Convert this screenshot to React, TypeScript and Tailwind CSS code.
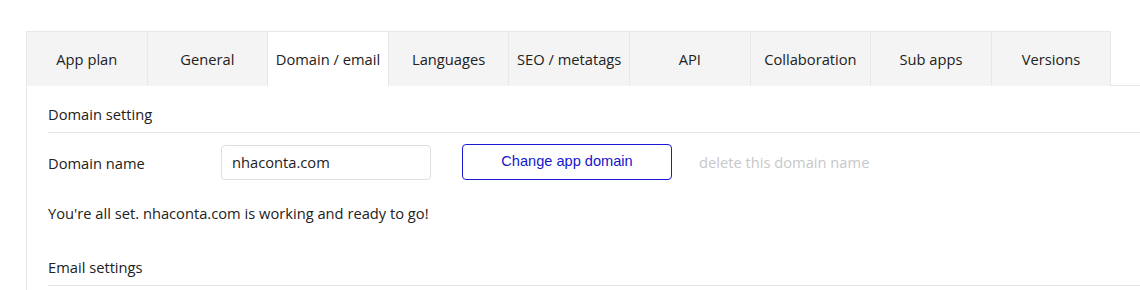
const tabs = [
  "App plan",
  "General",
  "Domain / email",
  "Languages",
  "SEO / metatags",
  "API",
  "Collaboration",
  "Sub apps",
  "Versions",
]

export default function App() {
  const active = "Domain / email"
  return (
    <div className="min-h-screen bg-white pt-[31px] pl-[26px] text-[14.7px] text-[#222] font-['Open_Sans',sans-serif]">
      <div className="flex">
        {tabs.map((t, i) => (
          <div
            key={t}
            className={`flex h-[55px] w-[120.6px] shrink-0 items-center justify-center border-t border-l border-[#e8e8e8] ${t === active ? "bg-white" : "bg-[#f4f4f4]"} ${i === tabs.length - 1 ? "border-r" : ""}`}
          >
            {t}
          </div>
        ))}
        <div className="flex-1 border-b border-[#e8e8e8]" />
      </div>
      <div className="border-l border-[#e8e8e8] pl-[21px] pb-10">
        <div className="border-b border-[#e5e5e5] pt-[17px] pb-[7px] leading-[22px]">Domain setting</div>
        <div className="mt-[11px] flex items-center">
          <div className="w-[173px] pt-[1px] leading-[22px]">Domain name</div>
          <input
            className="h-[35px] w-[210px] rounded-[4px] border border-[#dedede] px-[10px] text-[14.7px] text-[#222] outline-none"
            defaultValue="nhaconta.com"
          />
          <button className="ml-[31px] h-[36px] w-[210px] rounded-[4px] border border-[#1a1ad6] font-['Liberation_Sans',Arial,sans-serif] text-[14.6px] text-[#1515cc]">
            Change app domain
          </button>
          <span className="ml-[27px] text-[#c8c8c8]">delete this domain name</span>
        </div>
        <div className="mt-[22px] leading-[22px]">You're all set. nhaconta.com is working and ready to go!</div>
        <div className="mt-[32px] border-b border-[#e5e5e5] pb-[7px] leading-[22px]">Email settings</div>
      </div>
    </div>
  )
}
